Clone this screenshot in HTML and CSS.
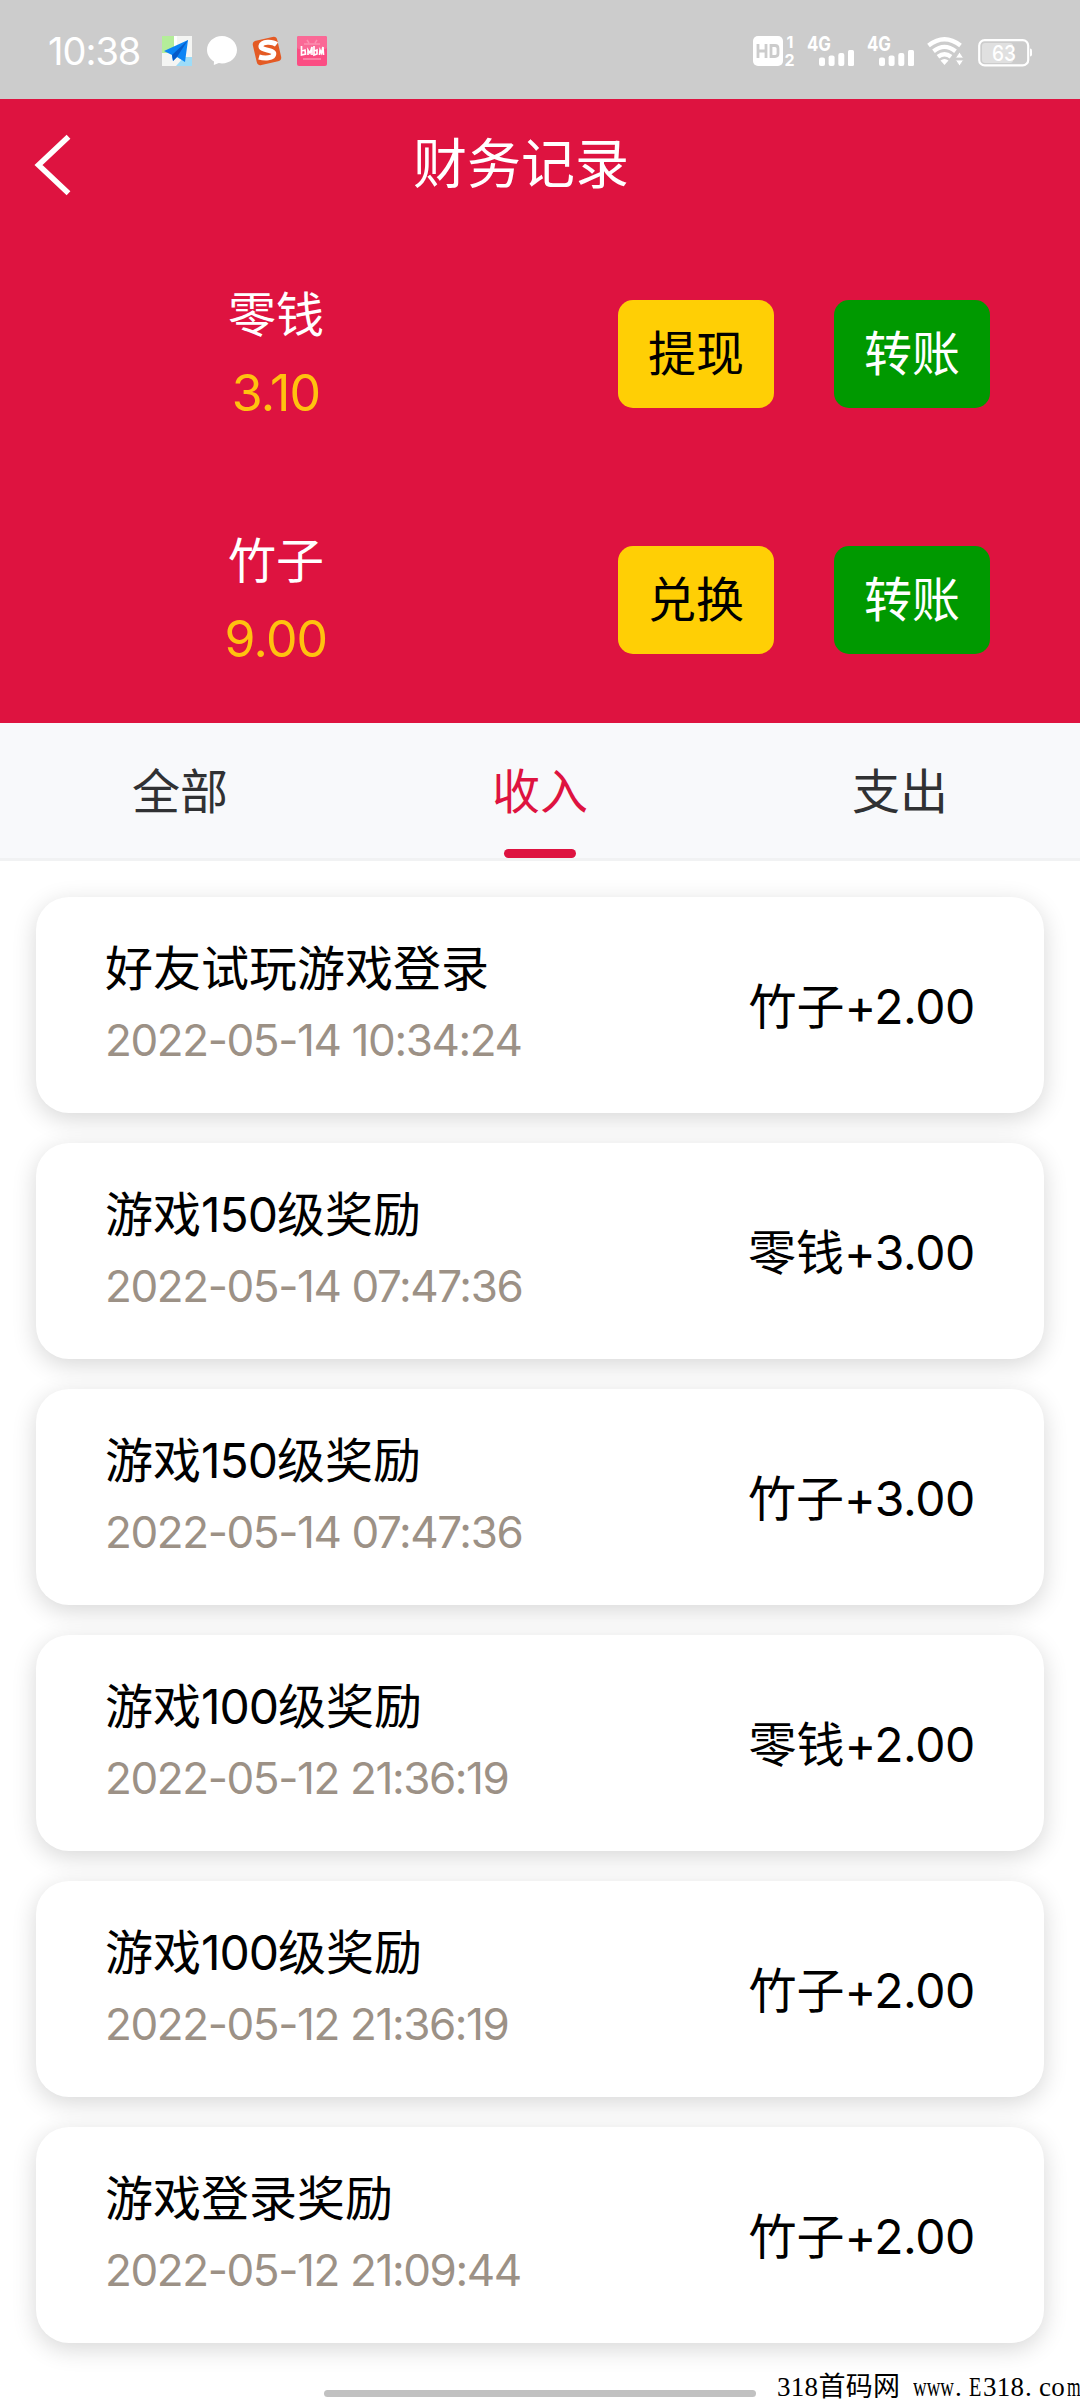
FILE: index.html
```
<!DOCTYPE html>
<html lang="zh-CN">
<head>
<meta charset="utf-8">
<title>财务记录</title>
<link rel="stylesheet" href="styles.css">
</head>
<body>
<div class="screen">
  <div class="status">
    <span class="clock">10:38</span>
    <div class="notifications">
      <svg width="30" height="30" viewBox="0 0 30 30"><rect width="30" height="30" fill="#f4f5f3"/><path d="M0 0h12v17H0z" fill="#b4ed99"/><path d="M12 0h3v12l-3 3z" fill="#fff"/><path d="M22 21h8v9H14z" fill="#9ddcf8"/><path d="M26 4 2 15l8 4 1 6 4-4 8 5z" fill="#0b84f5"/><path d="M26 4 10 19l1 6 4-4z" fill="#0759c8"/></svg>
      <svg width="30" height="30" viewBox="0 0 30 30"><path d="M15 0C6.700 0 0 6.300 0 14c0 4.800 2.800 9 7 11.500L6.800 29l5-2c1 .3 2.100.4 3.200.4 8.300 0 15-5.900 15-13.400S23.300 0 15 0z" fill="#fff"/></svg>
      <svg width="30" height="30" viewBox="0 0 30 30"><rect x="2.500" y="2.500" width="25" height="25" rx="4" fill="#e45a24" transform="rotate(-13 15 15)"/><path d="M24.500 8.500C20 5 10 5.500 9 9.800c-1 5 13 3.600 12.800 8.200-.2 4.500-9.300 4.600-14.800 3" fill="none" stroke="#fff" stroke-width="5"/></svg>
      <svg width="30" height="30" viewBox="0 0 30 30"><rect width="30" height="30" rx="2" fill="#fb4d83"/><rect width="30" height="13" rx="2" fill="#fa6996"/><path d="M10 4l2 3M20 4l-2 3M7 8h16M6 23h18" stroke="#fc90b0" stroke-width="1.500"/><path d="M4.500 10v9l4-1-.5-4-3.500 1M11 19v-5l2 3 2-6v8M17 10v9l3-1v-4l-3 1M22.500 19l.5-5 1.500 3 1.500-6 .5 8" fill="none" stroke="#fff" stroke-width="1.700"/></svg>
    </div>
    <div class="signals">
      <svg class="hd" width="43" height="30" viewBox="0 0 43 30"><rect width="30" height="30" rx="5" fill="#fff"/><path d="M5 8v14M13 8v14M5 15h8M18 9.500h4q3 0 3 3v5q0 3-3 3h-4z" fill="none" stroke="#ccc" stroke-width="2.800"/><text x="33.500" y="12" font-size="16">1</text><text x="31.500" y="29.500" font-size="16">2</text></svg>
      <svg class="cell" width="48" height="30" viewBox="0 0 48 30"><text x="0" y="15" font-size="20" textLength="24" lengthAdjust="spacingAndGlyphs">4G</text><g fill="#fff"><rect x="12" y="21.500" width="6" height="8.500" rx="2"/><rect x="21.600" y="19.500" width="6" height="10.500" rx="2"/><rect x="31.300" y="17" width="6" height="13" rx="2"/><rect x="41" y="14" width="6" height="16" rx="1.500"/></g></svg>
      <svg class="cell" width="48" height="30" viewBox="0 0 48 30"><text x="0" y="15" font-size="20" textLength="24" lengthAdjust="spacingAndGlyphs">4G</text><g fill="#fff"><rect x="12" y="21.500" width="6" height="8.500" rx="2"/><rect x="21.600" y="19.500" width="6" height="10.500" rx="2"/><rect x="31.300" y="17" width="6" height="13" rx="2"/><rect x="41" y="14" width="6" height="16" rx="1.500"/></g></svg>
      <svg class="wifi" width="36" height="30" viewBox="0 0 36 30"><g fill="none" stroke="#fff" stroke-width="4.300"><path d="M1.500 9.500q16-12.500 32 0"/><path d="M6.500 15.200q11-8.700 22 0"/><path d="M11 20.800q6.500-5 13 0"/></g><path d="M13.500 24.500q4-3 8 0l-4 4.500z" fill="#fff"/><path d="M28.500 22l4-6 4 6zM28.500 24l4 6 4-6z" fill="#fff" stroke="#ccc" stroke-width=".8"/></svg>
      <svg class="battery" width="54" height="28" viewBox="0 0 54 28"><rect x="4" y="4" width="31" height="20" rx="3" fill="#e0e0e0"/><rect x="1.200" y="1.200" width="49" height="25.200" rx="5.500" fill="none" stroke="#fff" stroke-width="2.200"/><path d="M52 9.500q2 0 2 2v4q0 2-2 2z" fill="#fff"/><text class="level" x="14" y="21.500" font-size="21" textLength="24" lengthAdjust="spacingAndGlyphs">63</text></svg>
    </div>
  </div>

  <header class="wallet">
    <div class="titlebar">
      <svg class="back" width="34" height="60" viewBox="0 0 34 60"><path d="M32.500 1.800 2.500 30l30 28.200" fill="none" stroke="#fff" stroke-width="5.500"/></svg>
      <h1>财务记录</h1>
    </div>
    <div class="account">
      <div class="balance"><span>零钱</span><strong>3.10</strong></div>
      <button class="yellow">提现</button>
      <button class="green">转账</button>
    </div>
    <div class="account">
      <div class="balance"><span>竹子</span><strong>9.00</strong></div>
      <button class="yellow">兑换</button>
      <button class="green">转账</button>
    </div>
  </header>

  <nav class="tabs">
    <a>全部</a>
    <a class="active">收入</a>
    <a>支出</a>
  </nav>

  <main class="records">
    <article><div><h2>好友试玩游戏登录</h2><time>2022-05-14 10:34:24</time></div><b>竹子<i>+2.00</i></b></article>
    <article><div><h2>游戏<i>150</i>级奖励</h2><time>2022-05-14 07:47:36</time></div><b>零钱<i>+3.00</i></b></article>
    <article><div><h2>游戏<i>150</i>级奖励</h2><time>2022-05-14 07:47:36</time></div><b>竹子<i>+3.00</i></b></article>
    <article><div><h2>游戏<i>100</i>级奖励</h2><time>2022-05-12 21:36:19</time></div><b>零钱<i>+2.00</i></b></article>
    <article><div><h2>游戏<i>100</i>级奖励</h2><time>2022-05-12 21:36:19</time></div><b>竹子<i>+2.00</i></b></article>
    <article><div><h2>游戏登录奖励</h2><time>2022-05-12 21:09:44</time></div><b>竹子<i>+2.00</i></b></article>
  </main>

  <div class="home-bar"></div>
  <div class="watermark"><span class="name">318首码网</span><span class="www">www</span><span class="dot">.</span><span class="cap">E</span><span class="num">318</span><span class="dot">.</span><span class="co">co</span><span class="m">m</span></div>
</div>
</body>
</html>
```
FILE: styles.css
```
* { box-sizing: border-box; }
body {
  margin: 0;
  background: #fff;
  font-family: Inter, "Noto Sans CJK SC", sans-serif;
  font-size: 48px;
  color: #000;
}
h1, h2, b, strong, i { margin: 0; font-weight: 400; font-style: normal; }
svg { display: block; flex: none; overflow: visible; }
svg text { fill: #fff; font-family: Inter, sans-serif; font-weight: 700; }
svg .level { font-weight: 500; }

.screen {
  position: relative;
  width: 1080px;
  height: 2400px;
  overflow: hidden;
}

.status {
  display: flex;
  align-items: flex-start;
  height: 99px;
  padding: 36px 48px 0;
  background: #ccc;
}
.clock {
  width: 114px;
  font-size: 38px;
  line-height: 30px;
  letter-spacing: -1px;
  color: #fff;
}
.notifications { display: flex; gap: 15px; }
.signals { display: flex; margin-left: auto; }
.hd { margin-right: 11px; }
.cell { margin-right: 12px; }
.wifi { margin-right: 15px; }
.battery { margin-top: 3px; }

.wallet {
  height: 624px;
  background: #de1340;
  color: #fff;
}
.titlebar {
  display: grid;
  grid-template-columns: 36px 1fr 74px;
  align-items: center;
  height: 132px;
}
.back { grid-column: 1; margin-left: 36px; }
.titlebar h1 {
  grid-column: 2;
  font-size: 54px;
  line-height: 72px;
  text-align: center;
}
.account {
  display: flex;
  align-items: center;
  height: 246px;
  padding-right: 90px;
}
.balance {
  display: flex;
  flex-direction: column;
  align-items: center;
  width: 552px;
  margin-right: 66px;
  line-height: 78px;
}
.balance strong { color: #ffc20f; font-size: 50px; letter-spacing: -0.8px; }
button {
  width: 156px;
  height: 108px;
  padding: 0;
  border: 0;
  border-radius: 15px;
  font: inherit;
  line-height: 108px;
}
.yellow { margin-right: 60px; background: #ffcf05; color: #000; }
.green { background: #009900; color: #fff; }

.tabs {
  display: flex;
  height: 138px;
  border-bottom: 3px solid #f1f2f3;
  background: #f8f9fb;
}
.tabs a {
  position: relative;
  flex: 1;
  line-height: 138px;
  text-align: center;
  color: #303133;
}
.tabs .active { color: #de1340; }
.tabs .active::after {
  content: "";
  position: absolute;
  left: 144px;
  bottom: 0;
  width: 72px;
  height: 9px;
  border-radius: 5px;
  background: #de1340;
}

.records {
  display: flex;
  flex-direction: column;
  gap: 30px;
  padding: 36px;
}
article {
  display: flex;
  justify-content: space-between;
  align-items: center;
  height: 216px;
  padding: 0 69px;
  border-radius: 33px;
  background: #fff;
  box-shadow: 0 6px 24px rgba(0, 0, 0, 0.16);
}
article h2 { font-size: 48px; line-height: 72px; }
article h2 i { letter-spacing: -1px; }
article b { padding-bottom: 5px; }
article b i { letter-spacing: -0.4px; }
time {
  display: block;
  font-size: 44px;
  line-height: 70px;
  margin-bottom: 2px;
  letter-spacing: -1.4px;
  color: #9c9186;
}

.home-bar {
  position: absolute;
  left: 324px;
  top: 2390px;
  width: 432px;
  height: 7px;
  border-radius: 4px;
  background: #c1c1c1;
}
.watermark {
  position: absolute;
  left: 777px;
  top: 2370px;
  display: flex;
  font: 27px/34px "Liberation Serif", "Noto Sans CJK SC", serif;
  white-space: nowrap;
}
.watermark span { transform-origin: left; }
.name { width: 136px; }
.name, .num, .co { letter-spacing: 0.3px; }
.www { width: 42px; transform: scaleX(0.7); }
.dot { width: 14px; }
.cap { width: 14px; transform: scaleX(0.75); }
.num { width: 42px; }
.co { width: 28px; }
.m { width: 14px; transform: scaleX(0.65); }
```
